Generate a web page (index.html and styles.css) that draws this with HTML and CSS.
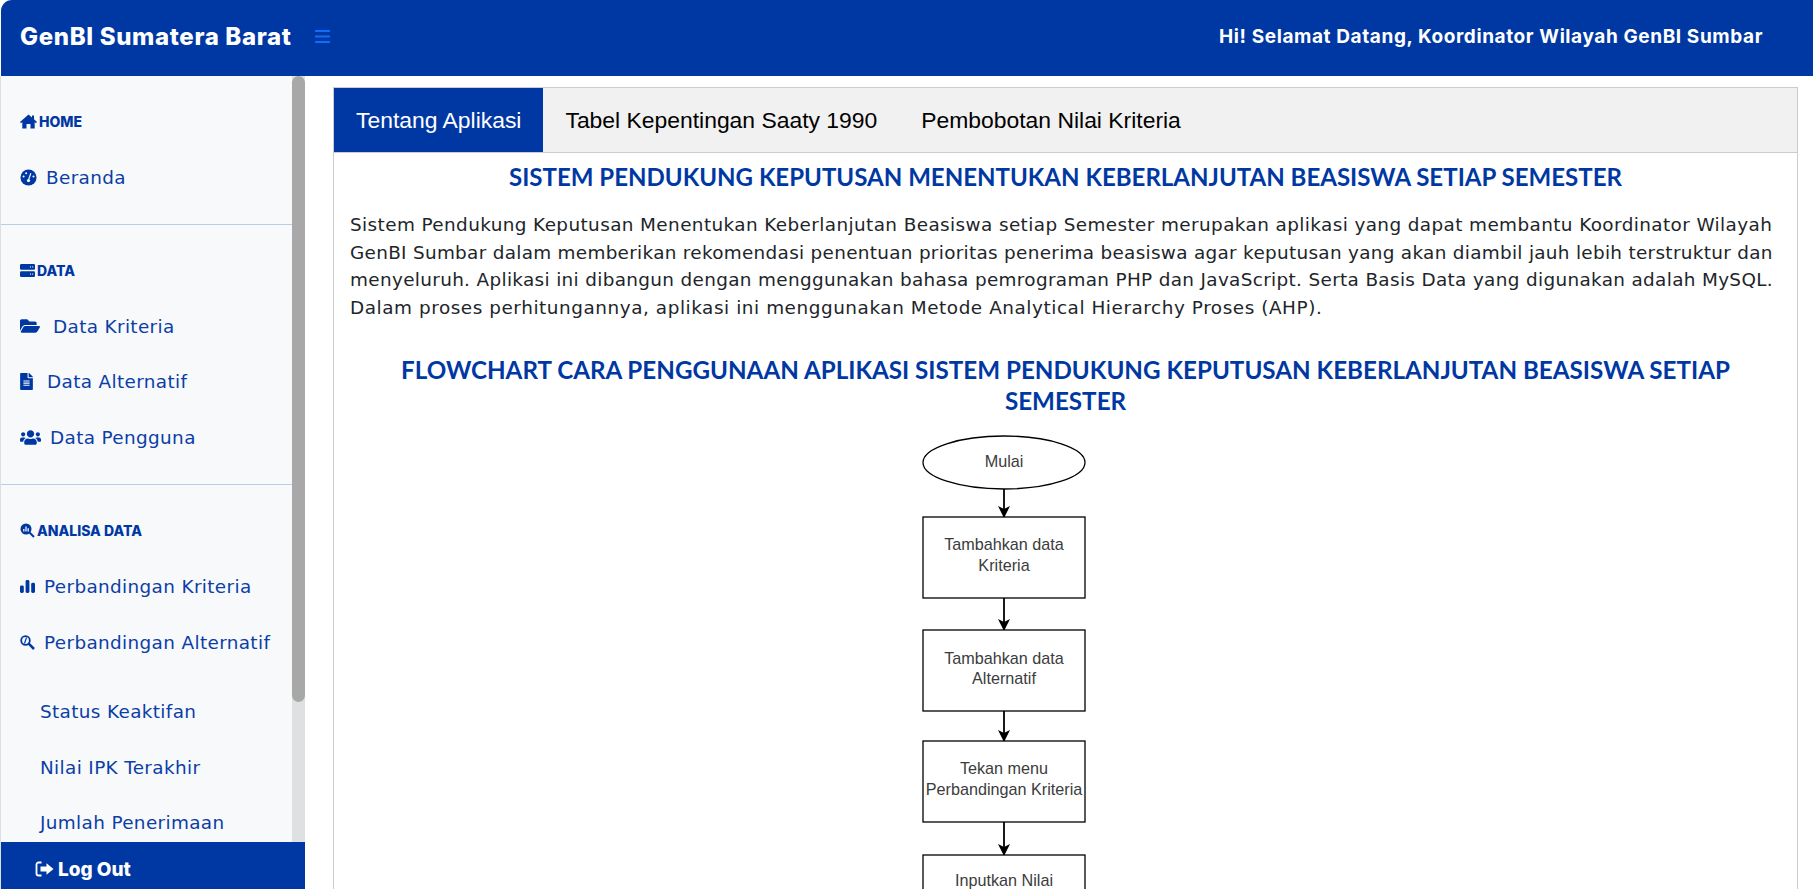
FILE: index.html
```html
<!DOCTYPE html>
<html lang="id">
<head>
<meta charset="utf-8">
<title>GenBI Sumatera Barat</title>
<link rel="stylesheet" href="styles.css">
</head>
<body>
<div class="app">
  <header class="topbar">
    <div class="brand">GenBI Sumatera Barat</div>
    <svg class="burger" viewBox="0 0 15 13"><path d="M0 1h15M0 6.500h15M0 12h15"/></svg>
    <div class="greeting">Hi! Selamat Datang, Koordinator Wilayah GenBI Sumbar</div>
  </header>
  <div class="body-row">
    <aside class="sidebar">
      <div class="side-main">
        <nav class="side-scroll">
          <div class="side-group first">
            <div class="side-title"><svg class="t-icon home" viewBox="0 0 17 15"><path d="M8.500 .5L0 8L1 9.200L2.300 8.100V14.500H6.500V10H10.500V14.500H14.700V8.100L16 9.200L17 8L14 5.300V1.500H12V3.500Z"/></svg>HOME</div>
            <a class="side-item"><svg class="i-icon gauge" viewBox="0 0 18 18"><circle cx="9" cy="9" r="8.500"/><path class="cut" d="M9 11.500L11.500 4.500"/><circle class="cut-dot" cx="6.500" cy="4.500" r="1.100"/><circle class="cut-dot" cx="3.800" cy="8" r="1.100"/><circle class="cut-dot" cx="14.300" cy="8" r="1.100"/><circle class="cut-dot" cx="9" cy="12.300" r="1.700"/></svg>Beranda</a>
          </div>
          <div class="side-group middle">
            <div class="side-title"><svg class="t-icon server" viewBox="0 0 15 13"><rect y="0" width="15" height="5.700" rx="1.200"/><rect y="7.300" width="15" height="5.700" rx="1.200"/><path class="cut-line" d="M10 2.850h.9M12.300 2.850h.9M10 10.150h.9M12.300 10.150h.9"/></svg>DATA</div>
            <a class="side-item"><svg class="i-icon folder" viewBox="0 0 576 512"><path d="M572.694 292.093L500.27 416.248A63.997 63.997 0 0 1 444.989 448H45.025c-18.523 0-30.064-20.093-20.731-36.093l72.424-124.155A64 64 0 0 1 152 256h399.964c18.523 0 30.064 20.093 20.73 36.093zM152 224h328v-48c0-26.51-21.49-48-48-48H272l-64-64H48C21.49 64 0 85.49 0 112v278.046l69.077-118.418C86.214 242.25 117.989 224 152 224z"/></svg>Data Kriteria</a>
            <a class="side-item"><svg class="i-icon file" viewBox="0 0 384 512"><path d="M224 136V0H24C10.700 0 0 10.700 0 24v464c0 13.300 10.700 24 24 24h336c13.300 0 24-10.700 24-24V160H248c-13.200 0-24-10.800-24-24zm64 236c0 6.600-5.400 12-12 12H108c-6.600 0-12-5.400-12-12v-8c0-6.600 5.400-12 12-12h168c6.600 0 12 5.400 12 12v8zm0-64c0 6.600-5.400 12-12 12H108c-6.600 0-12-5.400-12-12v-8c0-6.600 5.400-12 12-12h168c6.600 0 12 5.400 12 12v8zm0-72v8c0 6.600-5.400 12-12 12H108c-6.600 0-12-5.400-12-12v-8c0-6.600 5.400-12 12-12h168c6.600 0 12 5.400 12 12zm96-114.100v6.100H256V0h6.100c6.400 0 12.500 2.500 17 7l97.900 98c4.500 4.500 7 10.600 7 16.900z"/></svg>Data Alternatif</a>
            <a class="side-item"><svg class="i-icon users" viewBox="0 0 640 512"><path d="M96 224c35.300 0 64-28.700 64-64s-28.700-64-64-64-64 28.700-64 64 28.700 64 64 64zm448 0c35.300 0 64-28.700 64-64s-28.700-64-64-64-64 28.700-64 64 28.700 64 64 64zm32 32h-64c-17.600 0-33.500 7.100-45.100 18.600 40.300 22.100 68.900 62 75.100 109.400h66c17.700 0 32-14.300 32-32v-32c0-35.300-28.700-64-64-64zm-256 0c61.900 0 112-50.100 112-112S381.900 32 320 32 208 82.100 208 144s50.100 112 112 112zm76.800 32h-8.300c-20.800 10-43.900 16-68.500 16s-47.600-6-68.500-16h-8.300C179.600 288 128 339.600 128 403.200V432c0 26.500 21.500 48 48 48h288c26.500 0 48-21.500 48-48v-28.800c0-63.600-51.600-115.200-115.200-115.200zm-223.700-13.400C161.500 263.100 145.600 256 128 256H64c-35.300 0-64 28.700-64 64v32c0 17.700 14.300 32 32 32h65.900c6.300-47.400 34.900-87.300 75.200-109.400z"/></svg>Data Pengguna</a>
          </div>
          <div class="side-group last">
            <div class="side-title"><svg class="t-icon lens" viewBox="0 0 15 15"><circle cx="6" cy="6" r="5.500"/><path class="handle" d="M9.500 9.500L14 14"/><path class="bars" d="M3.800 8.500V6M6 8.500V3.500M8.200 8.500V5.200"/></svg>ANALISA DATA</div>
            <a class="side-item"><svg class="i-icon chart" viewBox="0 0 15 15"><rect x="0" y="6.500" width="3.800" height="7.500" rx="1.400"/><rect x="5.600" y="1" width="3.800" height="13" rx="1.400"/><rect x="11.200" y="3.800" width="3.800" height="10.200" rx="1.400"/></svg>Perbandingan Kriteria</a>
            <a class="side-item"><svg class="i-icon lens2" viewBox="0 0 15 15"><circle cx="5.500" cy="5.500" r="4.300"/><path class="handle2" d="M8.700 8.700L14 14"/><path class="bolt" d="M6.500 2.500L4.500 8.500"/></svg>Perbandingan Alternatif</a>
            <a class="side-item sub first-sub">Status Keaktifan</a>
            <a class="side-item sub">Nilai IPK Terakhir</a>
            <a class="side-item sub">Jumlah Penerimaan</a>
          </div>
        </nav>
        <div class="scrollbar"><div class="scroll-thumb"></div></div>
      </div>
      <a class="logout"><svg class="out-icon" viewBox="0 0 19 16"><path class="out-bracket" d="M6.500 1.500H3.500A2 2 0 0 0 1.500 3.500V12.500A2 2 0 0 0 3.500 14.500H6.500"/><path class="out-arrow" d="M11.500 2.200L18.500 8L11.500 13.800V10.500H5.500V5.500H11.500Z"/></svg>Log Out</a>
    </aside>
    <main class="content">
      <section class="panel">
        <div class="tabs">
          <button class="tab active">Tentang Aplikasi</button>
          <button class="tab">Tabel Kepentingan Saaty 1990</button>
          <button class="tab">Pembobotan Nilai Kriteria</button>
        </div>
        <div class="tab-body">
          <h2 class="title">SISTEM PENDUKUNG KEPUTUSAN MENENTUKAN KEBERLANJUTAN BEASISWA SETIAP SEMESTER</h2>
          <p class="intro"><span class="line l1">Sistem Pendukung Keputusan Menentukan Keberlanjutan Beasiswa setiap Semester merupakan aplikasi yang dapat membantu Koordinator Wilayah</span> <span class="line l2">GenBI Sumbar dalam memberikan rekomendasi penentuan prioritas penerima beasiswa agar keputusan yang akan diambil jauh lebih terstruktur dan</span> <span class="line l3">menyeluruh. Aplikasi ini dibangun dengan menggunakan bahasa pemrograman PHP dan JavaScript. Serta Basis Data yang digunakan adalah MySQL.</span> <span class="line l4">Dalam proses perhitungannya, aplikasi ini menggunakan Metode Analytical Hierarchy Proses (AHP).</span></p>
          <h2 class="title flow-title">FLOWCHART CARA PENGGUNAAN APLIKASI SISTEM PENDUKUNG KEPUTUSAN KEBERLANJUTAN BEASISWA SETIAP SEMESTER</h2>
          <svg class="flow" viewBox="0 0 166 500">
            <defs><marker id="arrow" markerWidth="12" markerHeight="12" refX="11" refY="6" orient="auto" markerUnits="userSpaceOnUse"><path d="M0 0L12 6L0 12L3 6Z" fill="#000"/></marker></defs>
            <ellipse class="node" cx="83" cy="27.500" rx="81" ry="26.500"/>
            <text class="flow-text" x="83" y="32">Mulai</text>
            <path class="edge" d="M83 54V82" marker-end="url(#arrow)"/>
            <rect class="node" x="2" y="82" width="162" height="81"/>
            <text class="flow-text" x="83" y="115">Tambahkan data</text>
            <text class="flow-text" x="83" y="135.500">Kriteria</text>
            <path class="edge" d="M83 163V195" marker-end="url(#arrow)"/>
            <rect class="node" x="2" y="195" width="162" height="81"/>
            <text class="flow-text" x="83" y="228.500">Tambahkan data</text>
            <text class="flow-text" x="83" y="249">Alternatif</text>
            <path class="edge" d="M83 276V306" marker-end="url(#arrow)"/>
            <rect class="node" x="2" y="306" width="162" height="81"/>
            <text class="flow-text" x="83" y="339">Tekan menu</text>
            <text class="flow-text" x="83" y="359.500">Perbandingan Kriteria</text>
            <path class="edge" d="M83 387V420" marker-end="url(#arrow)"/>
            <rect class="node" x="2" y="420" width="162" height="79"/>
            <text class="flow-text" x="83" y="451">Inputkan Nilai</text>
            <text class="flow-text" x="83" y="471.500">Perbandingan Antar</text>
          </svg>
        </div>
      </section>
    </main>
  </div>
</div>
</body>
</html>
```
FILE: styles.css
```css
* { box-sizing: border-box; }
html, body { height: 100%; margin: 0; }
body {
  background: #fff;
  font-family: "DejaVu Sans", Inter, sans-serif;
  overflow: hidden;
}
.app { display: flex; flex-direction: column; height: 100vh; }

.topbar {
  flex: none;
  display: flex;
  align-items: center;
  height: 76px;
  margin-left: 1px;
  padding: 0 50px 3px 19px;
  background: #0038a3;
  border-top-left-radius: 11px;
  color: #fff;
  font-family: Inter, sans-serif;
}
.brand { width: 295px; font-size: 24px; font-weight: 800; letter-spacing: .65px; white-space: nowrap; }
.burger { width: 15px; height: 13px; fill: none; stroke: #0d6efd; stroke-width: 2; }
.greeting { margin-left: auto; font-size: 19px; font-weight: 700; letter-spacing: .6px; }

.body-row { flex: 1; display: flex; min-height: 0; }

.sidebar {
  flex: none;
  width: 305px;
  display: flex;
  flex-direction: column;
  border-left: 1px solid #dcdfe3;
  background: #f8f9fb;
}
.side-main { flex: 1; min-height: 0; display: flex; }
.side-scroll { flex: 1; min-width: 0; overflow: hidden; color: #0038a3; }
.scrollbar { flex: none; width: 13px; background: #dfe0e2; }
.scroll-thumb { height: 626px; background: #a8a8a9; border-radius: 7px; }

.side-group { padding: 27px 19px 18px; border-bottom: 1px solid #b9cde8; }
.side-group.middle { padding: 28px 19px 19px; }
.side-group.last { border-bottom: 0; padding-bottom: 0; }
.side-title {
  display: flex;
  align-items: center;
  height: 36px;
  font-family: Inter, sans-serif;
  font-size: 14px;
  font-weight: 800;
}
.t-icon { flex: none; fill: #0038a3; margin-right: 2px; }
.t-icon.home { width: 17px; height: 15px; }
.t-icon.server { width: 15px; height: 13px; }
.t-icon.lens { width: 15px; height: 15px; }
.cut-line { stroke: #f8f9fb; stroke-width: 1.300; fill: none; }
.handle { stroke: #0038a3; stroke-width: 2; fill: none; }
.bars { stroke: #f8f9fb; stroke-width: 1.300; fill: none; }

.side-item {
  display: flex;
  align-items: center;
  height: 55.500px;
  font-size: 18.400px;
  letter-spacing: .36px;
  color: #0b3ea6;
  white-space: nowrap;
}
.side-title + .side-item { margin-top: 11px; }
.middle .side-title + .side-item { margin-top: 10px; }
.i-icon { flex: none; fill: #0038a3; margin-right: 9px; }
.i-icon.gauge { width: 17px; height: 17px; margin-right: 9px; }
.i-icon.folder { width: 20px; height: 18px; margin-right: 13px; }
.i-icon.file { width: 13px; height: 17px; margin-right: 14px; }
.i-icon.users { width: 21px; height: 17px; margin-right: 9px; }
.i-icon.chart { width: 15px; height: 15px; margin-right: 9px; }
.i-icon.lens2 { width: 15px; height: 15px; margin-right: 9px; fill: none; }
.cut { stroke: #f8f9fb; stroke-width: 1.300; fill: none; }
.cut-dot { fill: #f8f9fb; }
.lens2 circle { stroke: #0038a3; stroke-width: 1.800; fill: none; }
.handle2 { stroke: #0038a3; stroke-width: 2.500; fill: none; }
.bolt { stroke: #0038a3; stroke-width: 1.200; fill: none; }
.side-item.sub { padding-left: 20px; }
.side-item.first-sub { margin-top: 14px; }

.logout {
  flex: none;
  display: flex;
  align-items: center;
  height: 47px;
  padding: 7px 0 0 34px;
  background: #0038a3;
  color: #fff;
  font-family: Inter, sans-serif;
  font-size: 19px;
  font-weight: 800;
}
.out-icon { width: 19px; height: 16px; margin-right: 4px; }
.out-bracket { fill: none; stroke: #fff; stroke-width: 1.800; }
.out-arrow { fill: #fff; }

.content { flex: 1; min-width: 0; overflow: hidden; padding: 11px 15px 0 28px; }
.panel { border: 1px solid #ccc; border-bottom: 0; min-height: 100%; }
.tabs { display: flex; background: #f1f1f1; border-bottom: 1px solid #ccc; }
.tab {
  height: 64px;
  padding: 0 22px;
  border: 0;
  background: none;
  font-family: "Liberation Sans", Arial, sans-serif;
  font-size: 22.900px;
  color: #000;
}
.tab.active { background: #0038a3; color: #fff; }
.tab-body { padding: 8px 16px 0; }
.title {
  margin: 0;
  font-family: Lato, sans-serif;
  font-size: 24.050px;
  line-height: 32px;
  font-weight: 700;
  text-align: center;
  color: #0038a3;
}
.flow-title { margin-top: 32px; font-size: 24.200px; line-height: 31px; }
.intro {
  margin: 18px 0 0;
  font-size: 18.400px;
  line-height: 27.700px;
  color: #212529;
  white-space: nowrap;
}
.line { display: block; }
.l1 { letter-spacing: .4px; }
.l2 { letter-spacing: .305px; }
.l3 { letter-spacing: .34px; }
.l4 { letter-spacing: .56px; }
.flow { display: block; width: 166px; height: 500px; margin: 19px 0 0 571px; }
.node { fill: #fff; stroke: #000; stroke-width: 1.300; }
.edge { fill: none; stroke: #000; stroke-width: 1.800; }
.flow-text {
  font-family: "Liberation Sans", Arial, sans-serif;
  font-size: 16.200px;
  fill: #3c3c3c;
  text-anchor: middle;
}
```
